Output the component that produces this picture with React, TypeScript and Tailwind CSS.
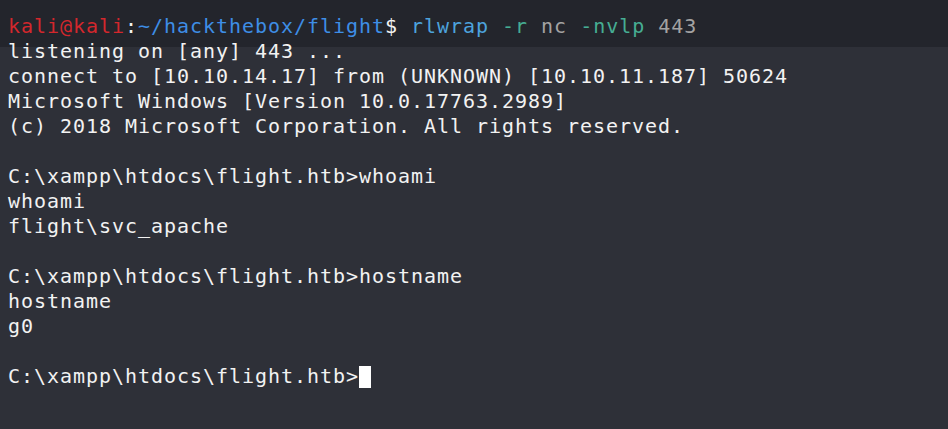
const Prompt = () => (
  <div>
    <span className="text-[#d4272c]">kali@kali</span>
    <span>:</span>
    <span className="text-[#3e8ee6]">~/hackthebox/flight</span>
    <span>$ </span>
    <span className="text-[#4da3dd]">rlwrap</span>
    <span className="text-[#46ad93]"> -r</span>
    <span className="text-[#a3a3a3]"> nc</span>
    <span className="text-[#46ad93]"> -nvlp</span>
    <span className="text-[#a3a3a3]"> 443</span>
  </div>
);

const lines = [
  "listening on [any] 443 ...",
  "connect to [10.10.14.17] from (UNKNOWN) [10.10.11.187] 50624",
  "Microsoft Windows [Version 10.0.17763.2989]",
  "(c) 2018 Microsoft Corporation. All rights reserved.",
  "",
  "C:\\xampp\\htdocs\\flight.htb>whoami",
  "whoami",
  "flight\\svc_apache",
  "",
  "C:\\xampp\\htdocs\\flight.htb>hostname",
  "hostname",
  "g0",
  "",
];

export default function App() {
  return (
    <div className="w-[948px] h-[429px] overflow-hidden bg-[linear-gradient(to_bottom,#23252c_47px,#2e3038_47px)] pl-2 pt-[14px] text-[20px] leading-[25px] tracking-[0.96px] text-[#f2f2f2] font-['DejaVu_Sans_Mono',monospace] whitespace-pre">
      <Prompt />
      {lines.map((l, i) => (
        <div key={i} className="h-[25px]">
          {l}
        </div>
      ))}
      <div className="flex items-center h-[25px]">
        <span>C:\xampp\htdocs\flight.htb&gt;</span>
        <span className="inline-block w-[12px] h-[22px] bg-white" />
      </div>
    </div>
  );
}
